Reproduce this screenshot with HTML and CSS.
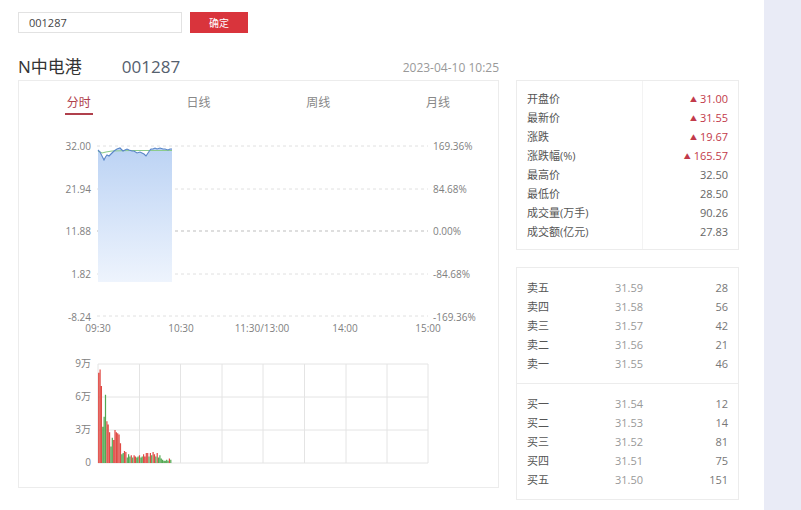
FILE: index.html
```html
<!DOCTYPE html>
<html lang="zh-CN">
<head>
    <meta charset="utf-8">
    <title>N中电港 001287</title>
    <link rel="stylesheet" href="styles.css">
</head>
<body>
    <div class="page">
        <main class="main">
            <div class="search">
                <input class="search-input" type="text" value="001287">
                <button class="search-btn">确定</button>
            </div>

            <div class="title-row">
                <div class="title"><span class="name">N中电港</span><span class="code">001287</span></div>
                <div class="time">2023-04-10 10:25</div>
            </div>

            <div class="content">
                <section class="chart-panel">
                    <div class="tabs">
                        <div class="tab active"><span>分时</span></div>
                        <div class="tab"><span>日线</span></div>
                        <div class="tab"><span>周线</span></div>
                        <div class="tab"><span>月线</span></div>
                    </div>
                    <svg class="chart" width="479" height="369" viewBox="19 118 479 369">
                        <defs>
                            <linearGradient id="areaFill" x1="0" y1="0" x2="0" y2="1">
                                <stop offset="0" stop-color="#bcd3f4"/>
                                <stop offset="1" stop-color="#eef4fd"/>
                            </linearGradient>
                        </defs>
                        <!-- 分时 grid -->
                        <g class="dash">
                            <line x1="97" y1="146" x2="428" y2="146"/>
                            <line x1="97" y1="189" x2="428" y2="189"/>
                            <line x1="97" y1="274" x2="428" y2="274"/>
                            <line x1="97" y1="316" x2="428" y2="316"/>
                        </g>
                        <line class="dash-mid" x1="97" y1="231" x2="428" y2="231"/>

                        <path class="area" d="M98 150 L100 152 L102 156 L104 160 L105.5 157 L107 155 L109 156 L112 153 L114 151 L117 149 L120 148 L122 150 L123 151 L125 150 L127 149 L129 150 L132 151 L134 151 L137 153 L140 152 L142 153 L144 154 L146 156 L148 153 L150 150 L151 149 L153 149 L155 148 L157 149 L160 148 L163 149 L165 149 L168 150 L170 149 L172 149 L172 282 L98 282 Z"/>
                        <path class="avg-line" d="M98 151 L102 153 L106 152 L112 151 L130 150.5 L150 150.5 L172 150.5"/>
                        <path class="price-line" d="M98 150 L100 152 L102 156 L104 160 L105.5 157 L107 155 L109 156 L112 153 L114 151 L117 149 L120 148 L122 150 L123 151 L125 150 L127 149 L129 150 L132 151 L134 151 L137 153 L140 152 L142 153 L144 154 L146 156 L148 153 L150 150 L151 149 L153 149 L155 148 L157 149 L160 148 L163 149 L165 149 L168 150 L170 149 L172 149"/>

                        <g class="axis axis-left">
                            <text x="91" y="146">32.00</text>
                            <text x="91" y="189">21.94</text>
                            <text x="91" y="231">11.88</text>
                            <text x="91" y="274">1.82</text>
                            <text x="91" y="317">-8.24</text>
                        </g>
                        <g class="axis axis-right">
                            <text x="433" y="146">169.36%</text>
                            <text x="433" y="189">84.68%</text>
                            <text x="433" y="231">0.00%</text>
                            <text x="433" y="274">-84.68%</text>
                            <text x="433" y="317">-169.36%</text>
                        </g>
                        <g class="axis axis-time">
                            <text x="98" y="328">09:30</text>
                            <text x="181" y="328">10:30</text>
                            <text x="262" y="328">11:30/13:00</text>
                            <text x="345" y="328">14:00</text>
                            <text x="428" y="328">15:00</text>
                        </g>

                        <!-- 成交量 grid -->
                        <g class="grid">
                            <line x1="98" y1="364" x2="428" y2="364"/>
                            <line x1="98" y1="397" x2="428" y2="397"/>
                            <line x1="98" y1="430" x2="428" y2="430"/>
                            <line x1="98" y1="463" x2="428" y2="463"/>
                            <line x1="98" y1="364" x2="98" y2="463"/>
                            <line x1="139.5" y1="364" x2="139.5" y2="463"/>
                            <line x1="180.5" y1="364" x2="180.5" y2="463"/>
                            <line x1="222" y1="364" x2="222" y2="463"/>
                            <line x1="263" y1="364" x2="263" y2="463"/>
                            <line x1="304.5" y1="364" x2="304.5" y2="463"/>
                            <line x1="346" y1="364" x2="346" y2="463"/>
                            <line x1="387" y1="364" x2="387" y2="463"/>
                            <line x1="428" y1="364" x2="428" y2="463"/>
                        </g>
                        <path class="bar-up" d="M98.7 463v-90.2M100.1 463v-93.5M101.4 463v-77M106.9 463v-41.8M108.2 463v-38.5M109.6 463v-30.8M113.7 463v-23.1M115 463v-33M116.4 463v-30.8M117.7 463v-29.7M119.1 463v-28.6M120.5 463v-19.8M124.5 463v-12.1M125.9 463v-11M131.3 463v-7.7M134.1 463v-7.7M135.4 463v-6.6M139.5 463v-7.7M143.6 463v-8.8M144.9 463v-6.6M146.3 463v-9.9M147.7 463v-9.9M150.4 463v-9.9M153.1 463v-11M154.5 463v-8.8M157.2 463v-9.9M169.4 463v-4.4"/>
                        <path class="bar-down" d="M102.8 463v-36.3M104.1 463v-46.2M105.5 463v-68.2M110.9 463v-16.5M112.3 463v-25.3M121.8 463v-8.8M123.2 463v-9.9M127.3 463v-5.5M128.6 463v-8.8M130 463v-6.6M132.7 463v-5.5M136.8 463v-5.5M138.1 463v-6.6M140.9 463v-5.5M142.2 463v-6.6M149 463v-6.6M151.7 463v-7.7M155.8 463v-6.6M158.5 463v-5.5M159.9 463v-7.7M161.3 463v-4.4M162.6 463v-3.3M164 463v-2.2M165.3 463v-2.2M166.7 463v-3.3M168.1 463v-2.2M170.8 463v-3.3"/>
                        <g class="axis axis-left">
                            <text x="91" y="363">9万</text>
                            <text x="91" y="396">6万</text>
                            <text x="91" y="429">3万</text>
                            <text x="91" y="462">0</text>
                        </g>
                    </svg>
                </section>

                <aside class="side">
                    <div class="quote">
                        <div class="quote-labels">
                            <div class="row">开盘价</div>
                            <div class="row">最新价</div>
                            <div class="row">涨跌</div>
                            <div class="row">涨跌幅(%)</div>
                            <div class="row">最高价</div>
                            <div class="row">最低价</div>
                            <div class="row">成交量(万手)</div>
                            <div class="row">成交额(亿元)</div>
                        </div>
                        <div class="quote-values">
                            <div class="row up"><i>▲</i>31.00</div>
                            <div class="row up"><i>▲</i>31.55</div>
                            <div class="row up"><i>▲</i>19.67</div>
                            <div class="row up"><i>▲</i>165.57</div>
                            <div class="row">32.50</div>
                            <div class="row">28.50</div>
                            <div class="row">90.26</div>
                            <div class="row">27.83</div>
                        </div>
                    </div>

                    <div class="book">
                        <div class="book-group">
                            <div class="book-row"><span>卖五</span><span class="price">31.59</span><span class="vol">28</span></div>
                            <div class="book-row"><span>卖四</span><span class="price">31.58</span><span class="vol">56</span></div>
                            <div class="book-row"><span>卖三</span><span class="price">31.57</span><span class="vol">42</span></div>
                            <div class="book-row"><span>卖二</span><span class="price">31.56</span><span class="vol">21</span></div>
                            <div class="book-row"><span>卖一</span><span class="price">31.55</span><span class="vol">46</span></div>
                        </div>
                        <div class="book-group">
                            <div class="book-row"><span>买一</span><span class="price">31.54</span><span class="vol">12</span></div>
                            <div class="book-row"><span>买二</span><span class="price">31.53</span><span class="vol">14</span></div>
                            <div class="book-row"><span>买三</span><span class="price">31.52</span><span class="vol">81</span></div>
                            <div class="book-row"><span>买四</span><span class="price">31.51</span><span class="vol">75</span></div>
                            <div class="book-row"><span>买五</span><span class="price">31.50</span><span class="vol">151</span></div>
                        </div>
                    </div>
                </aside>
            </div>
        </main>
        <div class="stripe"></div>
    </div>
</body>
</html>
```

FILE: styles.css
```css
body {
    margin: 0;
    font-family: "Open Sans", "Noto Sans CJK SC", sans-serif;
    color: #333;
    background: #fff;
}
.page {
    display: flex;
    min-height: 510px;
}
.main {
    width: 746px;
    padding: 12px 0 0 18px;
}
.stripe {
    flex: 1;
    background-color: #e9ebf6;
}

/* 搜索 */
.search {
    display: flex;
    height: 21px;
}
.search-input {
    box-sizing: border-box;
    width: 164px;
    height: 21px;
    margin: 0;
    padding: 0 0 0 10px;
    border: 1px solid #e2e2e2;
    font-family: inherit;
    font-size: 11px;
    color: #444;
    outline: none;
}
.search-btn {
    width: 58px;
    height: 21px;
    margin-left: 8px;
    padding: 0;
    border: none;
    background-color: #d9343c;
    color: #fff;
    font-family: inherit;
    font-size: 10px;
    cursor: pointer;
}

/* 标题 */
.title-row {
    width: 481px;
    height: 22px;
    margin: 23px 0 2px;
    display: flex;
    justify-content: space-between;
    align-items: center;
}
.title {
    font-size: 17px;
    line-height: 22px;
}
.title .name {
    color: #333;
}
.title .code {
    margin-left: 40px;
    color: #55606e;
}
.time {
    font-size: 12px;
    color: #999;
}

.content {
    display: flex;
    gap: 17px;
}

/* 图表 */
.chart-panel {
    width: 479px;
    height: 406px;
    border: 1px solid #ececec;
    background: #fff;
}
.tabs {
    display: grid;
    grid-template-columns: repeat(4, 1fr);
    height: 37px;
}
.tab {
    text-align: center;
    padding-top: 13px;
    font-size: 12px;
    color: #888;
}
.tab span {
    display: inline-block;
    line-height: 16px;
    padding: 0 2px 2px;
}
.tab.active span {
    color: #b0404c;
    border-bottom: 2px solid #b0404c;
}
.chart {
    display: block;
}
.dash line {
    stroke: #e0e0e0;
    stroke-dasharray: 3 3;
}
.dash-mid {
    stroke: #bdbdbd;
    stroke-dasharray: 3 3;
}
.area {
    fill: url(#areaFill);
}
.price-line {
    fill: none;
    stroke: #5a86c8;
    stroke-width: 1.1;
}
.avg-line {
    fill: none;
    stroke: #8ccb8c;
    stroke-width: 1.1;
}
.axis text {
    font-size: 10px;
    fill: #808080;
    dominant-baseline: central;
}
.axis-left text {
    text-anchor: end;
}
.axis-time text {
    text-anchor: middle;
}
.grid line {
    stroke: #e4e4e4;
    stroke-width: 1;
}
.bar-up {
    stroke: #e04a44;
    stroke-width: 1.2;
}
.bar-down {
    stroke: #52a852;
    stroke-width: 1.2;
}

/* 右侧行情 */
.side {
    width: 223px;
    display: flex;
    flex-direction: column;
    gap: 17px;
}
.row,
.book-row {
    height: 19px;
    line-height: 19px;
    font-size: 11px;
    white-space: nowrap;
}
.quote {
    display: grid;
    grid-template-columns: 126px 1fr;
    border: 1px solid #ececec;
}
.quote-labels {
    padding: 8px 0 8px 10px;
    border-right: 1px solid #f3f3f3;
    color: #555;
}
.quote-values {
    padding: 8px 10px 8px 0;
    text-align: right;
    color: #666;
}
.quote-values .up {
    color: #c23a4a;
}
.quote-values i {
    font-style: normal;
    font-size: 7px;
    margin-right: 3px;
    vertical-align: 1px;
}
.book {
    border: 1px solid #ececec;
}
.book-group {
    padding: 10px 10px;
}
.book-group + .book-group {
    border-top: 1px solid #ececec;
}
.book-row {
    display: grid;
    grid-template-columns: 88px 60px 1fr;
    color: #555;
}
.book-row .price {
    color: #999;
}
.book-row .vol {
    text-align: right;
    color: #777;
}
```
